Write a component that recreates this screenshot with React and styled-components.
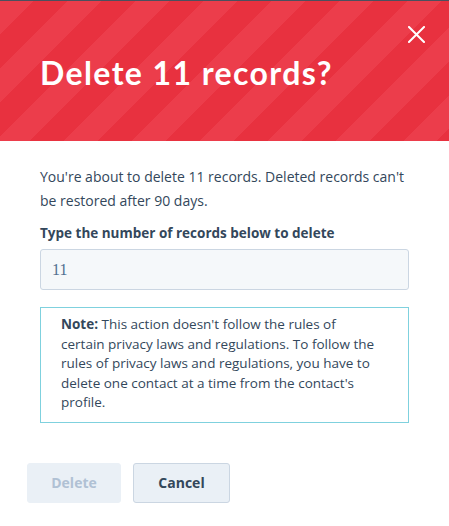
import React from "react";
import styled, { createGlobalStyle } from "styled-components";

const Global = createGlobalStyle`
  html, body { margin: 0; padding: 0; background: #ffffff; }
  body { font-family: "Open Sans", "Lato", sans-serif; color: #33475b; }
  * { box-sizing: border-box; }
`;

const Modal = styled.div`
  width: 449px;
  height: 526px;
  background: #ffffff;
  border-top: 1px solid #4b505e;
  display: flex;
  flex-direction: column;
`;

const Header = styled.header`
  position: relative;
  height: 140px;
  display: flex;
  align-items: center;
  padding: 0 40px;
  background: repeating-linear-gradient(
    135deg,
    #ec3d4b 0px,
    #ec3d4b 24px,
    #e8313f 24px,
    #e8313f 48px
  );
`;

const Title = styled.h1`
  margin: 0;
  margin-top: 2px;
  font-family: "Lato", sans-serif;
  font-weight: 700;
  font-size: 32px;
  letter-spacing: 1.4px;
  color: #ffffff;
`;

const Close = styled.button`
  position: absolute;
  top: 24px;
  right: 24px;
  width: 18px;
  height: 18px;
  padding: 0;
  border: 0;
  background: transparent;
  cursor: pointer;
  display: flex;
  align-items: center;
  justify-content: center;
`;

const Body = styled.div`
  padding: 24px 40px 0;
  display: flex;
  flex-direction: column;
`;

const Text = styled.p`
  margin: 0;
  font-family: "Open Sans", sans-serif;
  font-size: 14px;
  line-height: 24px;
  color: #33475b;
`;

const Label = styled.label`
  margin-top: 8px;
  font-family: "Open Sans", sans-serif;
  font-weight: 700;
  font-size: 13.5px;
  line-height: 24px;
  color: #33475b;
`;

const Input = styled.div`
  margin-top: 4px;
  height: 41px;
  border: 1px solid #cbd6e2;
  border-radius: 3px;
  background: #f5f8fa;
  padding: 0 11px;
  display: flex;
  align-items: center;
  font-family: "Liberation Serif", serif;
  font-size: 16px;
  color: #516f90;
`;

const Note = styled.div`
  margin-top: 17px;
  border: 1px solid #7fd1de;
  padding: 7px 6px 9px 20px;
  font-family: "Open Sans", sans-serif;
  font-size: 13.5px;
  line-height: 19.6px;
  color: #33475b;
  & b { font-weight: 700; }
`;

const Footer = styled.div`
  padding: 40px 27px 0;
  display: flex;
  gap: 12px;
`;

const Button = styled.button`
  height: 40px;
  width: ${(p) => p.$w}px;
  border-radius: 3px;
  font-family: "Open Sans", sans-serif;
  font-weight: 700;
  font-size: 14px;
  background: #eaf0f6;
  border: 1px solid ${(p) => (p.$disabled ? "#eaf0f6" : "#cbd6e2")};
  color: ${(p) => (p.$disabled ? "#b0c1d4" : "#33475b")};
  padding: 0;
`;

export default function App() {
  return (
    <>
      <Global />
      <Modal>
        <Header>
          <Title>Delete 11 records?</Title>
          <Close aria-label="Close">
            <svg width="17" height="17" viewBox="0 0 17 17">
              <path d="M1 1 L16 16 M16 1 L1 16" stroke="#fff" strokeWidth="2" strokeLinecap="square" />
            </svg>
          </Close>
        </Header>
        <Body>
          <Text>
            You're about to delete 11 records. Deleted records can't be restored after 90 days.
          </Text>
          <Label>Type the number of records below to delete</Label>
          <Input>11</Input>
          <Note>
            <b>Note:</b> This action doesn't follow the rules of<br />
            certain privacy laws and regulations. To follow the<br />
            rules of privacy laws and regulations, you have to<br />
            delete one contact at a time from the contact's<br />
            profile.
          </Note>
        </Body>
        <Footer>
          <Button $w={94} $disabled>Delete</Button>
          <Button $w={97}>Cancel</Button>
        </Footer>
      </Modal>
    </>
  );
}
